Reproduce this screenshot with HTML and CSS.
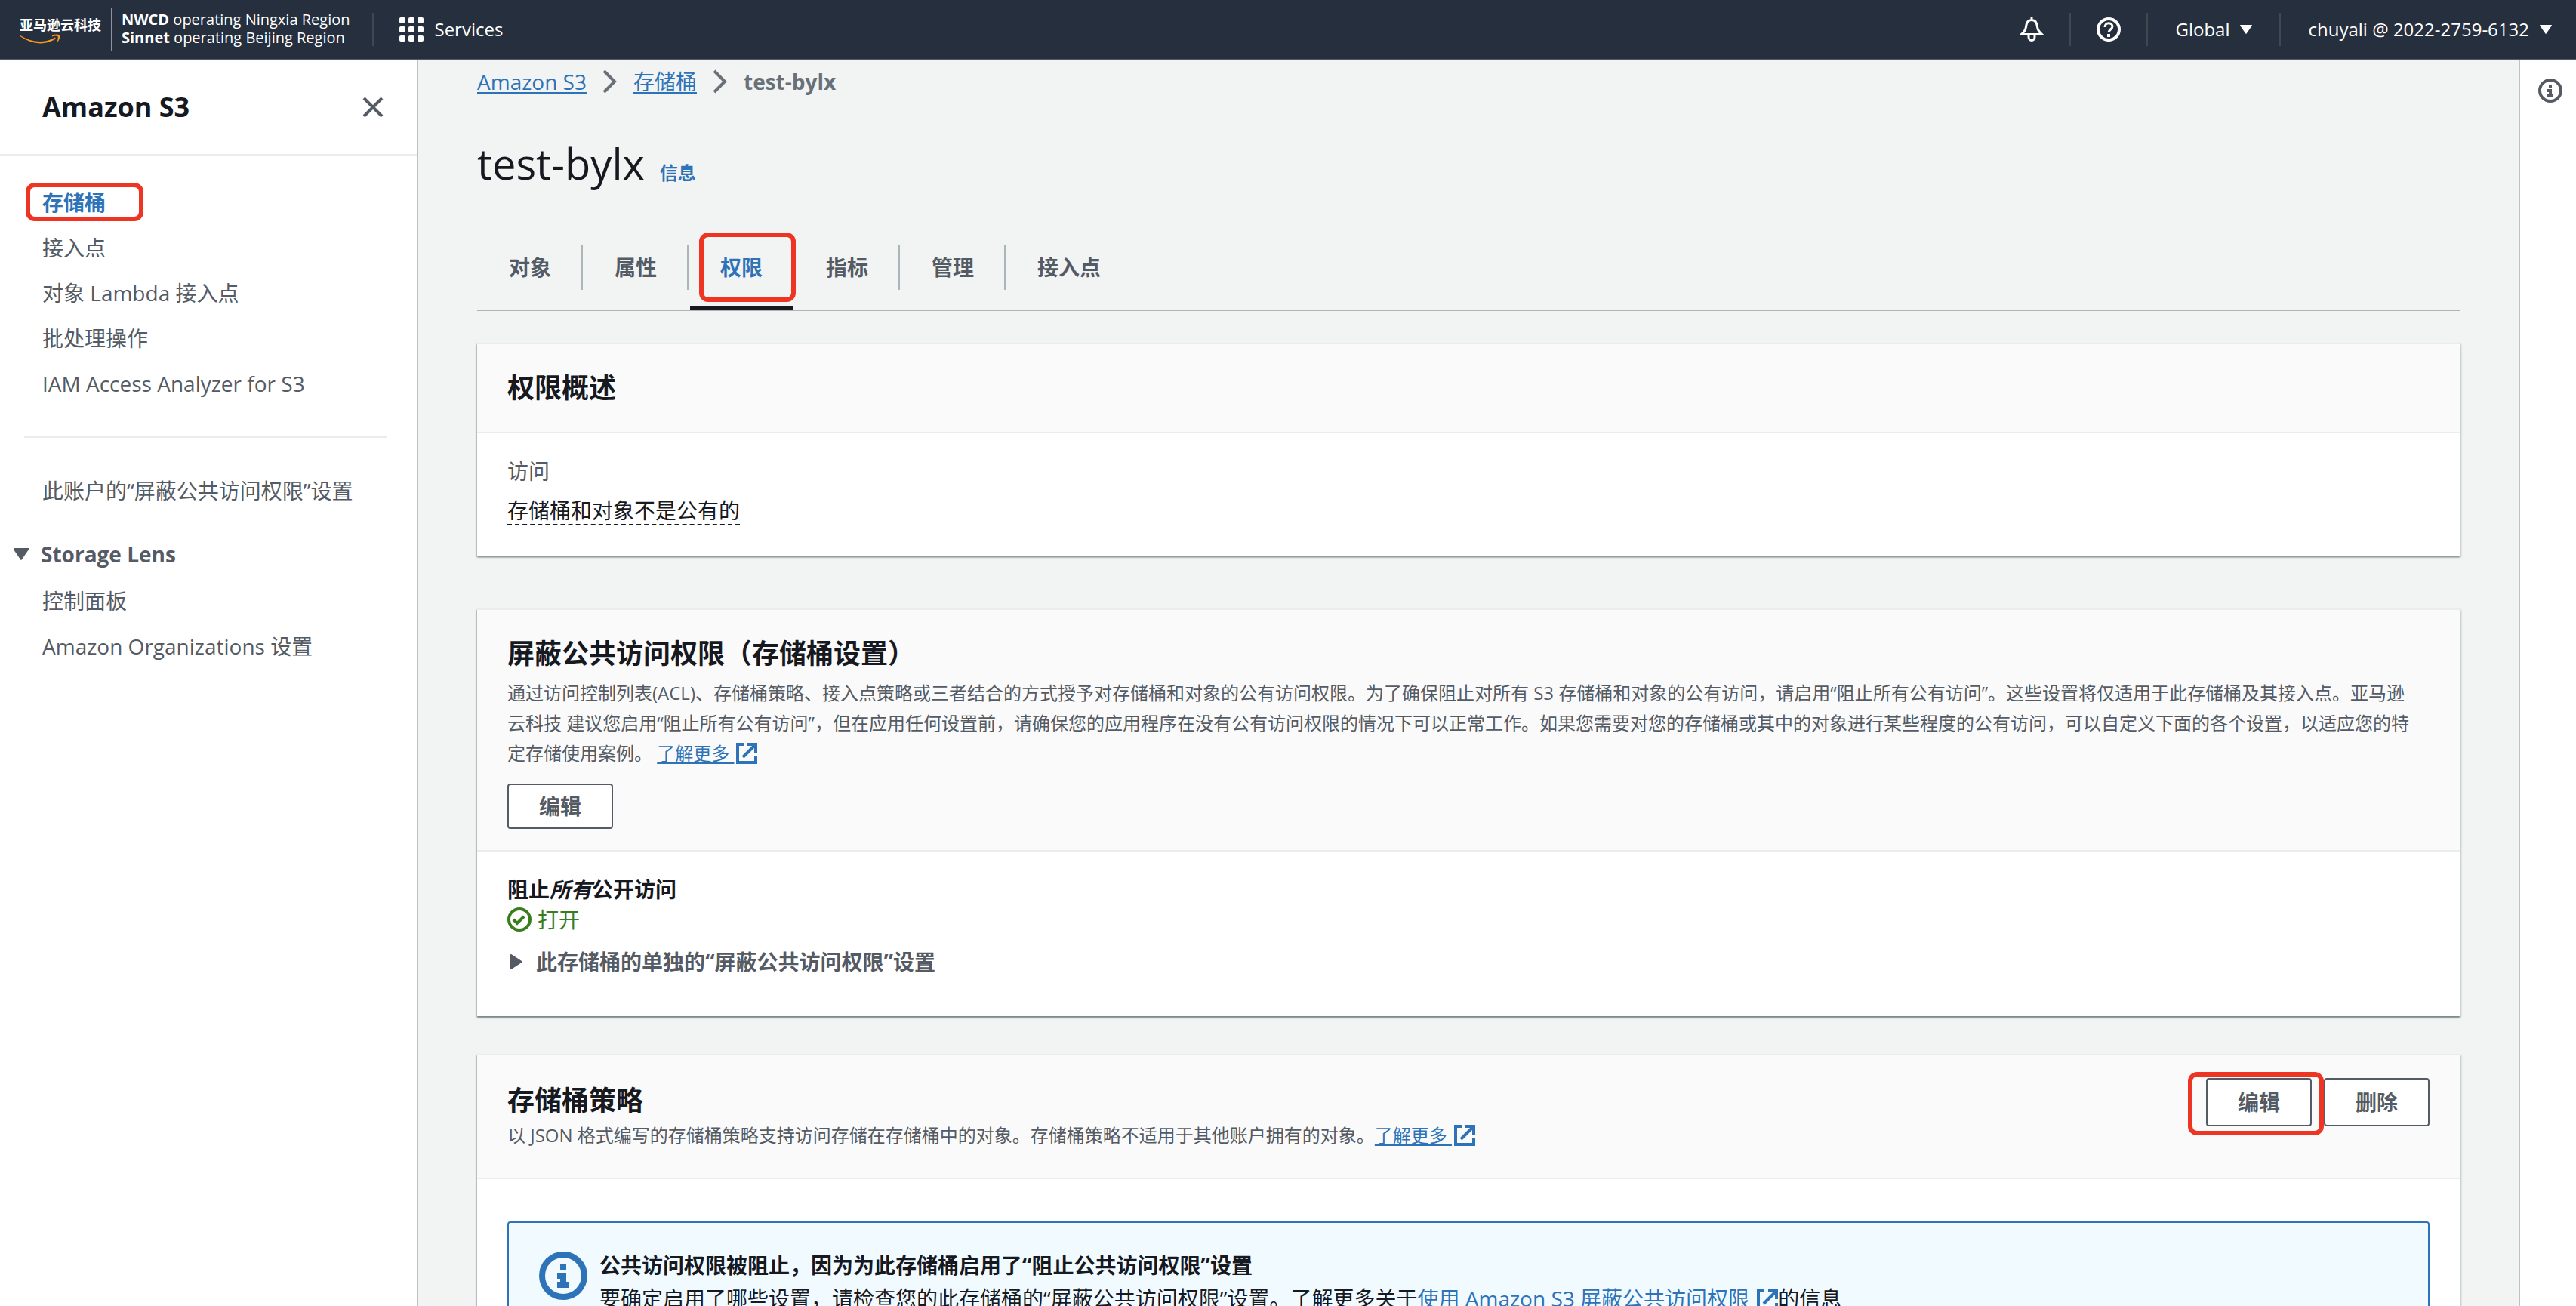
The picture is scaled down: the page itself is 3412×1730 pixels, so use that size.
FILE: index.html
```html
<!DOCTYPE html>
<html lang="zh-CN">
<head>
    <meta charset="UTF-8">
    <meta name="viewport" content="width=device-width, initial-scale=1.0">
    <title>test-bylx - S3</title>
    <link rel="stylesheet" href="styles.css">
</head>
<body>
    <!-- shared icons -->
    <svg class="sprite" aria-hidden="true">
        <symbol id="icon-external" viewBox="0 0 28 28">
            <path d="M10 2H2v24h24v-8M15 2h11v11M25 3L9 19" fill="none" stroke="currentColor" stroke-width="4"/>
        </symbol>
        <symbol id="icon-info" viewBox="0 0 32 32">
            <circle cx="16" cy="16" r="14" fill="none" stroke="currentColor" stroke-width="4"/>
            <path d="M14 8h4v4h-4zM12 14h6v6h2v4h-8v-4h2v-2h-2z" fill="currentColor"/>
        </symbol>
        <symbol id="icon-chevron" viewBox="0 0 20 32">
            <path d="M2 2l14 14L2 30" fill="none" stroke="currentColor" stroke-width="4"/>
        </symbol>
        <symbol id="icon-down" viewBox="0 0 20 16">
            <path d="M1 0h18a1 1 0 0 1 1 2L11 15q-1 2-2 0L0 2a1 1 0 0 1 1-2z" fill="currentColor"/>
        </symbol>
    </svg>

    <div class="app">
        <header class="topbar">
            <a class="logo" href="#">
                <span>亚马逊云科技</span>
                <svg width="54" height="14" viewBox="0 0 54 14">
                    <path d="M0 1.500Q25 17 47 4.500L48 6.500Q25 20 0 2.800Z" fill="#f7981f"/>
                    <path d="M43 1.500Q49 -.5 53 1.500Q54.500 6 49 12Q51.500 6 50.500 3Q47 2 43 3.500Z" fill="#f7981f"/>
                </svg>
            </a>
            <div class="operators">
                <div><b>NWCD</b> operating Ningxia Region</div>
                <div><b>Sinnet</b> operating Beijing Region</div>
            </div>
            <button class="top-item services" type="button">
                <svg width="32" height="32" viewBox="0 0 32 32" fill="currentColor">
                    <rect x="0" y="0" width="8" height="8" rx="2"/><rect x="12" y="0" width="8" height="8" rx="2"/><rect x="24" y="0" width="8" height="8" rx="2"/>
                    <rect x="0" y="12" width="8" height="8" rx="2"/><rect x="12" y="12" width="8" height="8" rx="2"/><rect x="24" y="12" width="8" height="8" rx="2"/>
                    <rect x="0" y="24" width="8" height="8" rx="2"/><rect x="12" y="24" width="8" height="8" rx="2"/><rect x="24" y="24" width="8" height="8" rx="2"/>
                </svg>
                Services
            </button>
            <div class="top-right">
                <button class="top-item" type="button" aria-label="通知">
                    <svg width="32" height="32" viewBox="0 0 32 32" fill="none" stroke="currentColor" stroke-width="3">
                        <path d="M16 0v4M16 3.500c-5 0-7 4-7.500 9-.4 4.500-2.500 7-6 10h27c-3.500-3-5.600-5.500-6-10-.5-5-2.500-9-7.500-9z"/>
                        <path d="M12 23v3a4 4.500 0 0 0 8 0v-3"/>
                    </svg>
                </button>
                <button class="top-item" type="button" aria-label="帮助">
                    <svg width="32" height="32" viewBox="0 0 32 32" fill="none" stroke="currentColor" stroke-width="4">
                        <circle cx="16" cy="16" r="14"/>
                        <path d="M11 13c0-7 10-6.500 10-1 0 4-5 4-5 8" stroke-width="3"/>
                        <path d="M16 22v4"/>
                    </svg>
                </button>
                <button class="top-item menu" type="button" aria-haspopup="true">Global <svg width="16" height="12"><use href="#icon-down"/></svg></button>
                <button class="top-item menu" type="button" aria-haspopup="true">chuyali @ 2022-2759-6132 <svg width="16" height="12"><use href="#icon-down"/></svg></button>
            </div>
        </header>

        <div class="body">
            <nav class="sidebar">
                <div class="sidebar-head">
                    <h2>Amazon S3</h2>
                    <button class="icon-button" type="button" aria-label="关闭">
                        <svg width="28" height="28" viewBox="0 0 28 28"><path d="M2 2l24 24M26 2L2 26" stroke="currentColor" stroke-width="4"/></svg>
                    </button>
                </div>
                <ul>
                    <li><a class="current marked" href="#">存储桶</a></li>
                    <li><a href="#">接入点</a></li>
                    <li><a href="#">对象 Lambda 接入点</a></li>
                    <li><a href="#">批处理操作</a></li>
                    <li><a href="#">IAM Access Analyzer for S3</a></li>
                </ul>
                <hr>
                <ul>
                    <li><a href="#">此账户的“屏蔽公共访问权限”设置</a></li>
                </ul>
                <details class="nav-group" open>
                    <summary><svg width="20" height="16"><use href="#icon-down"/></svg>Storage Lens</summary>
                    <ul>
                        <li><a href="#">控制面板</a></li>
                        <li><a href="#">Amazon Organizations 设置</a></li>
                    </ul>
                </details>
            </nav>

            <main class="content">
                <div class="breadcrumb">
                    <a href="#">Amazon S3</a>
                    <svg width="20" height="32"><use href="#icon-chevron"/></svg>
                    <a href="#">存储桶</a>
                    <svg width="20" height="32"><use href="#icon-chevron"/></svg>
                    <b>test-bylx</b>
                </div>
                <div class="page-title">
                    <h1>test-bylx</h1>
                    <a href="#">信息</a>
                </div>
                <div class="tabs" role="tablist">
                    <button type="button" role="tab">对象</button>
                    <button type="button" role="tab">属性</button>
                    <button class="active marked" type="button" role="tab" aria-selected="true">权限</button>
                    <button type="button" role="tab">指标</button>
                    <button type="button" role="tab">管理</button>
                    <button type="button" role="tab">接入点</button>
                </div>

                <section class="card">
                    <div class="card-head">
                        <h2>权限概述</h2>
                    </div>
                    <div class="card-body">
                        <div class="field-label">访问</div>
                        <div class="field-value"><span>存储桶和对象不是公有的</span></div>
                    </div>
                </section>

                <section class="card">
                    <div class="card-head">
                        <h2>屏蔽公共访问权限（存储桶设置）</h2>
                        <p class="description">通过访问控制列表(ACL)、存储桶策略、接入点策略或三者结合的方式授予对存储桶和对象的公有访问权限。为了确保阻止对所有 S3 存储桶和对象的公有访问，请启用“阻止所有公有访问”。这些设置将仅适用于此存储桶及其接入点。亚马逊云科技 建议您启用“阻止所有公有访问”，但在应用任何设置前，请确保您的应用程序在没有公有访问权限的情况下可以正常工作。如果您需要对您的存储桶或其中的对象进行某些程度的公有访问，可以自定义下面的各个设置，以适应您的特定存储使用案例。 <a href="#">了解更多 <svg class="external" width="28" height="28"><use href="#icon-external"/></svg></a></p>
                        <button class="btn" type="button">编辑</button>
                    </div>
                    <div class="card-body">
                        <div class="setting-name">阻止<i>所有</i>公开访问</div>
                        <div class="status">
                            <svg width="32" height="32" viewBox="0 0 32 32" fill="none" stroke="currentColor" stroke-width="4"><circle cx="16" cy="16" r="14"/><path d="M8 16l5 5 9-9"/></svg>
                            打开
                        </div>
                        <details class="expand">
                            <summary><svg width="16" height="20" viewBox="0 0 16 20"><path d="M0 1q0-2 2-.5l13 8.500q1 1 0 2L2 19.500q-2 1.500-2-.5z" fill="currentColor"/></svg>此存储桶的单独的“屏蔽公共访问权限”设置</summary>
                        </details>
                    </div>
                </section>

                <section class="card">
                    <div class="card-head with-actions">
                        <div>
                            <h2>存储桶策略</h2>
                            <p class="description">以 JSON 格式编写的存储桶策略支持访问存储在存储桶中的对象。存储桶策略不适用于其他账户拥有的对象。<a href="#">了解更多 <svg class="external" width="28" height="28"><use href="#icon-external"/></svg></a></p>
                        </div>
                        <div class="actions">
                            <button class="btn marked" type="button">编辑</button>
                            <button class="btn" type="button">删除</button>
                        </div>
                    </div>
                    <div class="card-body policy">
                        <div class="alert">
                            <svg width="64" height="64"><use href="#icon-info"/></svg>
                            <div>
                                <b>公共访问权限被阻止，因为为此存储桶启用了“阻止公共访问权限”设置</b>
                                <p>要确定启用了哪些设置，请检查您的此存储桶的“屏蔽公共访问权限”设置。了解更多关于<a href="#">使用 Amazon S3 屏蔽公共访问权限 <svg class="external" width="28" height="28"><use href="#icon-external"/></svg></a>的信息</p>
                            </div>
                        </div>
                    </div>
                </section>
            </main>

            <aside class="tools">
                <button class="icon-button" type="button" aria-label="信息"><svg width="32" height="32"><use href="#icon-info"/></svg></button>
            </aside>
        </div>
    </div>
</body>
</html>
```

FILE: styles.css
```css
* {
    box-sizing: border-box;
}

body {
    margin: 0;
    font-family: "Open Sans", "Noto Sans CJK SC", sans-serif;
    font-size: 28px;
    line-height: 44px;
    color: #16191f;
}

h1, h2, p, ul {
    margin: 0;
    padding: 0;
}

ul {
    list-style: none;
}

a {
    color: #2e73b8;
    text-decoration-thickness: 2px;
    text-underline-offset: 3px;
}

button {
    font: inherit;
    cursor: pointer;
}

svg {
    flex: none;
}

summary {
    display: flex;
    align-items: center;
    cursor: pointer;
    font-weight: bold;
}

.sprite {
    display: none;
}

.app {
    height: 100vh;
    display: flex;
    flex-direction: column;
    overflow: hidden;
}

/* Top bar */
.topbar {
    flex: none;
    height: 80px;
    display: flex;
    align-items: center;
    background: #262f3e;
    border-bottom: 2px solid #545b64;
    color: #fff;
}

.logo {
    height: 58px;
    display: flex;
    flex-direction: column;
    justify-content: center;
    padding: 2px 13px 0 26px;
    border-right: 1px solid #8d949e;
    font-size: 18px;
    font-weight: bold;
    line-height: 24px;
    color: #fff;
    text-decoration: none;
}

.operators {
    padding: 0 30px 2px 13px;
    font-size: 20px;
    line-height: 24px;
}

.top-item {
    height: 44px;
    display: flex;
    align-items: center;
    gap: 14px;
    padding: 0 34px;
    background: none;
    border: 0;
    border-left: 2px solid #414750;
    font-size: 24px;
    color: #fff;
}

.top-right {
    display: flex;
    margin-left: auto;
}

.top-right .top-item:first-child {
    border: 0;
}

.top-right .menu {
    padding: 0 36px;
}

.top-right .menu:last-child {
    padding-right: 32px;
}

/* Sidebar */
.body {
    flex: 1;
    display: flex;
    min-height: 0;
}

.sidebar {
    flex: none;
    width: 554px;
    border-right: 2px solid #bcc3c4;
    background: #fff;
    color: #545b64;
}

.sidebar-head {
    display: flex;
    align-items: center;
    justify-content: space-between;
    height: 126px;
    margin-bottom: 32px;
    padding: 0 44px 0 56px;
    border-bottom: 2px solid #eaeded;
}

.sidebar-head h2 {
    font-size: 36px;
    color: #16191f;
}

.sidebar li {
    padding-left: 56px;
    line-height: 60px;
}

.sidebar a {
    color: inherit;
    text-decoration: none;
}

.sidebar a.current {
    font-weight: bold;
    color: #2e73b8;
}

.sidebar hr {
    margin: 40px 40px 40px 32px;
    border: 0;
    border-top: 2px solid #eaeded;
}

.nav-group {
    margin-top: 22px;
}

.nav-group summary {
    gap: 16px;
    padding-left: 18px;
    line-height: 64px;
}

.icon-button {
    display: flex;
    padding: 0;
    background: none;
    border: 0;
    color: #545b64;
}

/* Red highlight boxes */
.marked {
    position: relative;
}

.marked::after {
    content: "";
    position: absolute;
    border: 6px solid #ee3524;
    border-radius: 12px;
}

.sidebar .marked::after {
    inset: -7px -50px -6px -22px;
}

.tabs .marked::after {
    inset: -16px -4px -16px 12px;
}

.actions .marked::after {
    inset: -10px -18px -14px -26px;
}

/* Content */
.content {
    flex: 1;
    min-width: 0;
    padding: 6px 78px 0;
    background: #f2f3f3;
    overflow: hidden;
}

.breadcrumb {
    display: flex;
    align-items: center;
    gap: 21px;
    color: #687078;
}

.page-title {
    display: flex;
    align-items: baseline;
    gap: 20px;
    margin: 42px 0 51px;
    line-height: 88px;
}

.page-title h1 {
    font-size: 56px;
    font-weight: normal;
}

.page-title a {
    font-size: 24px;
    font-weight: bold;
    text-decoration: none;
}

.tabs {
    display: flex;
    margin-bottom: 42px;
    padding-bottom: 26px;
    border-bottom: 2px solid #aab7b8;
}

.tabs button {
    height: 60px;
    padding: 0 40px;
    background: none;
    border: solid transparent;
    border-width: 0 2px;
    border-right-color: #aab7b8;
    font-weight: bold;
    color: #545b64;
}

.tabs button:last-child {
    border-color: transparent;
}

.tabs button.active {
    border-right-color: transparent;
    color: #2e73b8;
}

.tabs button.active::before {
    content: "";
    position: absolute;
    right: 0;
    bottom: -26px;
    left: 0;
    height: 4px;
    background: #16191f;
}

/* Cards */
.card {
    margin-bottom: 70px;
    background: #fff;
    border-top: 2px solid #eaeded;
    box-shadow: 0 2px 2px #7b8789, 2px 2px 2px #c5cbcb, -1px 2px 2px #c5cbcb;
}

.card + .card + .card {
    margin-top: -20px;
}

.card-head {
    padding: 36px 40px;
    background: #fafafa;
    border-bottom: 2px solid #eaeded;
}

.card-head h2 {
    font-size: 36px;
    line-height: 44px;
}

.description {
    margin-top: 10px;
    padding-right: 16px;
    font-size: 24px;
    line-height: 40px;
    color: #545b64;
}

.description + .btn {
    height: 60px;
    margin-top: 20px;
}

.card-head:has(> .btn) {
    padding-bottom: 28px;
}

.card-body {
    padding: 28px 40px 38px;
}

.external {
    margin-left: 3px;
    vertical-align: -5px;
}

.btn {
    display: block;
    height: 64px;
    padding: 0 40px;
    background: #fff;
    border: 2px solid #545b64;
    border-radius: 4px;
    font-weight: bold;
    color: #545b64;
}

.with-actions {
    display: flex;
    justify-content: space-between;
    padding-top: 38px;
}

.with-actions .description {
    margin-top: 4px;
}

.actions {
    display: flex;
    gap: 16px;
    margin-top: -8px;
}

.field-label {
    color: #545b64;
}

.field-value {
    margin-top: 8px;
}

.field-value span {
    display: inline-block;
    border-bottom: 2px dashed #16191f;
    line-height: 36px;
}

.setting-name {
    font-weight: bold;
}

.status {
    display: flex;
    align-items: center;
    gap: 8px;
    line-height: 36px;
    color: #3a7d1e;
}

.expand {
    padding: 16px 0 12px 4px;
    color: #545b64;
}

.expand summary {
    gap: 18px;
}

.policy {
    padding-top: 56px;
}

.alert {
    display: flex;
    align-items: flex-start;
    gap: 16px;
    padding: 34px 40px;
    background: #f1faff;
    border: 2px solid #2e73b8;
    border-radius: 4px;
}

.alert svg {
    color: #2e73b8;
}

.alert > svg {
    margin-top: 4px;
}

/* Right panel */
.tools {
    flex: none;
    width: 76px;
    padding: 24px;
    background: #fff;
    border-left: 2px solid #bcc3c4;
}
```
